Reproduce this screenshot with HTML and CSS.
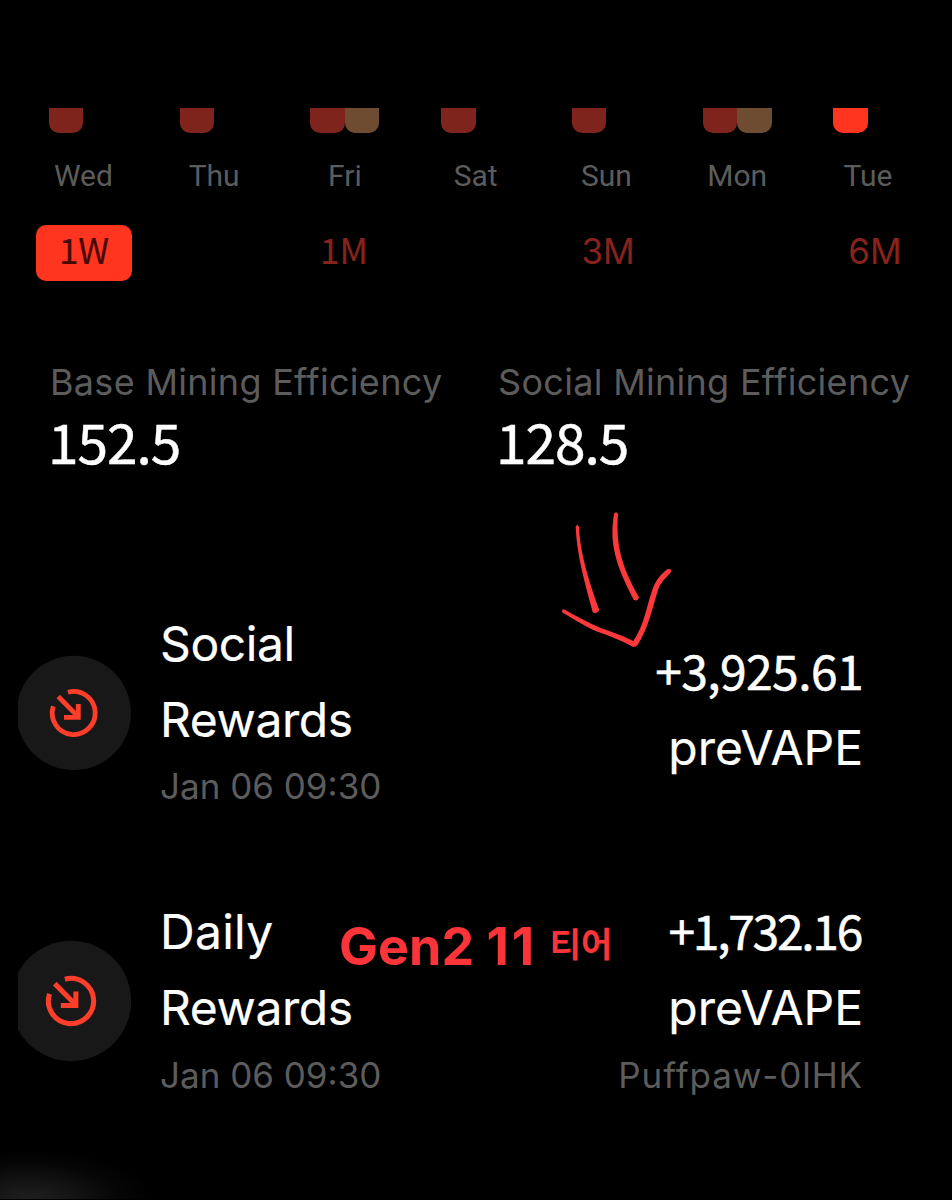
FILE: index.html
```html
<!DOCTYPE html>
<html lang="en">
<head>
    <meta charset="UTF-8">
    <title>Mining Rewards</title>
    <link rel="stylesheet" href="styles.css">
</head>
<body>
    <div class="page">
        <div class="chart">
            <div class="day"><div class="bars"><i class="bar"></i></div><span>Wed</span></div>
            <div class="day"><div class="bars"><i class="bar"></i></div><span>Thu</span></div>
            <div class="day"><div class="bars"><i class="bar"></i><i class="bar social"></i></div><span>Fri</span></div>
            <div class="day"><div class="bars"><i class="bar"></i></div><span>Sat</span></div>
            <div class="day"><div class="bars"><i class="bar"></i></div><span>Sun</span></div>
            <div class="day"><div class="bars"><i class="bar"></i><i class="bar social"></i></div><span>Mon</span></div>
            <div class="day"><div class="bars"><i class="bar today"></i></div><span>Tue</span></div>
        </div>

        <div class="tabs">
            <div class="tab active">1W</div>
            <div class="tab one">1M</div>
            <div class="tab">3M</div>
            <div class="tab">6M</div>
        </div>

        <div class="stats">
            <div class="stat">
                <div class="label">Base Mining Efficiency</div>
                <div class="value">152.5</div>
            </div>
            <div class="stat">
                <div class="label">Social Mining Efficiency</div>
                <div class="value">128.5</div>
            </div>
        </div>

        <div class="reward">
            <div class="icon">
                <svg width="113" height="116" viewBox="-55.7 -58 113 116">
                    <circle r="57.2" fill="#181818"/>
                    <g fill="none" stroke="#ff3d2b" stroke-width="4.8">
                        <path d="M-5.8 -20.7A21.5 21.5 0 1 1 -20.4 -6.8"/>
                        <path d="M-15.5 -16.5L4.4 3.6M4.6 -9V4.3H-9.7"/>
                    </g>
                </svg>
            </div>
            <div class="name">
                <div class="title">Social<br>Rewards</div>
                <div class="sub">Jan 06 09:30</div>
            </div>
            <div class="amount">
                <div class="number">+3,925.61</div>
                <div class="token">preVAPE</div>
            </div>
        </div>

        <div class="reward second">
            <div class="icon">
                <svg width="113" height="122" viewBox="-50.4 -58 107.4 116">
                    <circle r="57.2" fill="#181818"/>
                    <g fill="none" stroke="#ff3d2b" stroke-width="4.8">
                        <path d="M-5.8 -20.7A21.5 21.5 0 1 1 -20.4 -6.8"/>
                        <path d="M-15.5 -16.5L4.4 3.6M4.6 -9V4.3H-9.7"/>
                    </g>
                </svg>
            </div>
            <div class="name">
                <div class="title"><span class="daily">Daily</span><br>Rewards</div>
                <div class="sub">Jan 06 09:30</div>
            </div>
            <div class="amount">
                <div class="number tight">+1,732.16</div>
                <div class="token">preVAPE</div>
                <div class="sub wallet">Puffpaw-0lHK</div>
            </div>
        </div>

        <svg class="arrow" width="150" height="160" viewBox="0 0 450 480">
            <path d="M107 80Q112 70 117 80C120 150 140 225 178 330Q170 346 158 336C132 240 110 160 107 80Z"/>
            <path d="M222 41Q228 32 234 41C228 130 240 190 297 292Q293 306 281 299C225 190 208 130 222 41Z"/>
            <path d="M72 328C110 350 145 368 180 383C215 396 245 405 280 423C310 380 320 320 335 275C348 235 365 222 383 207Q398 206 392 218C375 235 360 250 354 270C338 320 326 385 292 436Q282 446 270 436C240 420 210 408 175 396C140 382 100 356 68 338Q62 330 72 328Z"/>
        </svg>
        <div class="note">Gen2 <b>11</b> <span>티어</span></div>
        <div class="glow"></div>
    </div>
</body>
</html>
```

FILE: styles.css
```css
body {
    margin: 0;
    background: #000;
    color: #fff;
    font-family: Inter, 'Noto Sans CJK KR', sans-serif;
}

.page {
    position: relative;
    box-sizing: border-box;
    width: 952px;
    height: 1200px;
    padding-top: 108px;
    overflow: hidden;
    white-space: nowrap;
}

.chart {
    display: grid;
    grid-template-columns: repeat(7, 130.75px);
    margin-left: 18px;
    height: 117px;
}

.day {
    text-align: center;
    font-family: Roboto, sans-serif;
    font-size: 30px;
    line-height: 40px;
    color: #5c5c5c;
}

.bars {
    display: flex;
    width: 69px;
    margin: 0 auto 23px;
}

.bar {
    width: 34.5px;
    height: 25px;
    background: #7f241c;
    border-radius: 0 0 10px 10px;
}

.bar.social {
    background: #6d4c32;
}

.bar.today {
    background: #ff3520;
}

.tabs {
    display: grid;
    grid-template-columns: 260px 264px 267px 96px;
    margin-left: 36px;
}

.tab {
    width: 96px;
    height: 56px;
    border-radius: 10px;
    text-align: center;
    font-size: 35px;
    line-height: 53px;
    color: #88231b;
}

.tab.active,
.tab.one {
    font-family: 'Noto Sans CJK KR', sans-serif;
    line-height: 48px;
    -webkit-text-stroke: 0.2px;
}

.tab.active {
    background: #ff3520;
    color: #450a06;
}

.stats {
    display: grid;
    grid-template-columns: 448px 420px;
    margin: 81px 0 0 50px;
}

.label {
    font-size: 36px;
    line-height: 41px;
    letter-spacing: 0.3px;
    color: #5c5c5c;
}

.value {
    margin-left: -2px;
    font-family: 'Noto Sans CJK KR', sans-serif;
    font-size: 55px;
    line-height: 75px;
    letter-spacing: -1px;
    -webkit-text-stroke: 0.5px;
}

.reward {
    display: flex;
    height: 208px;
    margin: 128px 89px 0 18px;
}

.reward.second {
    margin-top: 80px;
}

.icon {
    width: 142px;
    padding-top: 49px;
}

.second .icon {
    padding-top: 46px;
}

.icon svg {
    display: block;
}

.title,
.number,
.token {
    font-size: 48px;
    line-height: 76px;
}

.title {
    letter-spacing: -0.4px;
    -webkit-text-stroke: 0.2px;
}

.daily {
    letter-spacing: 0.3px;
}

.token {
    -webkit-text-stroke: 0.2px;
}

.sub {
    font-size: 35px;
    line-height: 56px;
    color: #5c5c5c;
}

.second .sub {
    line-height: 59px;
}

.sub.wallet {
    letter-spacing: 0.9px;
}

.amount {
    margin-left: auto;
    padding-top: 28px;
    text-align: right;
}

.second .amount {
    padding-top: 0;
}

.number {
    font-family: 'Noto Sans CJK KR', sans-serif;
    line-height: 70px;
    padding-bottom: 6px;
    letter-spacing: -0.6px;
    -webkit-text-stroke: 0.5px;
}

.number.tight {
    padding-right: 2px;
    letter-spacing: -2.3px;
}

.arrow {
    position: absolute;
    left: 540px;
    top: 500px;
    fill: #fb383a;
}

.note {
    position: absolute;
    left: 339px;
    top: 917px;
    font-size: 52px;
    line-height: 60px;
    font-weight: 700;
    color: #fb3439;
}

.note b {
    font-weight: 700;
    letter-spacing: 3px;
}

.note span {
    position: relative;
    top: -8px;
    font-family: 'Noto Sans CJK KR', sans-serif;
    font-size: 34px;
    font-weight: 700;
}

.glow {
    position: absolute;
    left: 0;
    bottom: 1px;
    width: 160px;
    height: 60px;
    background: radial-gradient(ellipse 125px 50px at 30px 100%, #1f1f1f, #141414 35%, #060606 70%, #000);
}
```
